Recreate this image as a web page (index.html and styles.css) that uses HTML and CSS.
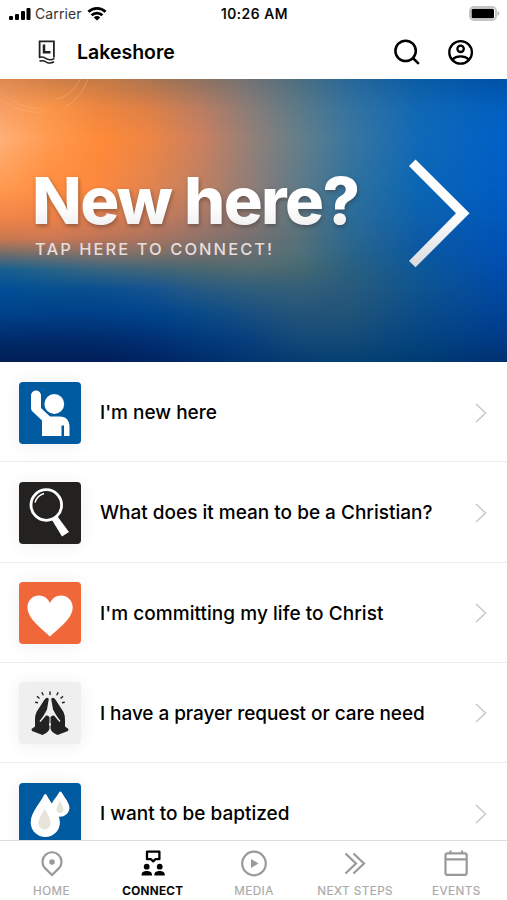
FILE: index.html
```html
<!DOCTYPE html>
<html lang="en">
<head>
<meta charset="utf-8">
<title>Lakeshore</title>
<link rel="stylesheet" href="styles.css">
</head>
<body>
<div class="app">
  <div class="status">
    <div class="carrier">
      <svg width="23" height="14" viewBox="0 0 23 14"><rect x="0" y="9" width="4" height="4" rx="1"/><rect x="6" y="7" width="4" height="6" rx="1"/><rect x="12" y="4" width="4" height="9" rx="1"/><rect x="17.500" y="1" width="4" height="12" rx="1"/></svg>
      <span class="carrier-name">Carrier</span>
      <svg width="20" height="14" viewBox="0 0 20 14" fill="none" stroke="#000" stroke-width="2.700"><path d="M1.400 4.800a12.500 12.500 0 0 1 17.200 0M4.600 8.300a7.800 7.800 0 0 1 10.800 0"/><path d="M10 13.500 6.800 10.400a4.500 4.500 0 0 1 6.400 0z" fill="#000" stroke="none"/></svg>
    </div>
    <span class="time">10:26 AM</span>
    <svg class="battery" width="31" height="15" viewBox="0 0 31 15"><rect x="1" y="1" width="26" height="13" rx="4" fill="#fff" stroke="#c4c4c4" stroke-width="2"/><rect x="2.600" y="2.700" width="22.400" height="9.500" rx="1.500"/><path d="M28.500 5v4.800q2-.8 2-2.400t-2-2.400z" fill="#bbb"/></svg>
  </div>
  <header class="header">
    <svg class="logo" width="18" height="26" viewBox="0 0 18 26" fill="none" stroke="#222"><path d="M1.600 18.300V2.300H15.900V18.600" stroke-width="1.800"/><path d="M6 5.500v7.700h6.500" stroke-width="2.500"/><path d="M1 18.700c3.200-2 5.500 0 8 1.300 2.600 1.200 5 .9 7.500-.7M1.500 22.300c3-1.500 5-.2 7.500 1.100 2.300 1 4.600.8 7-.6" stroke-width="1.600"/></svg>
    <h1 class="title">Lakeshore</h1>
    <svg class="search" width="26" height="26" viewBox="0 0 26 26" fill="none" stroke="#000" stroke-width="2.500"><circle cx="11.600" cy="11.900" r="10.200"/><path d="m18.800 19 6 5.800"/></svg>
    <svg width="26" height="26" viewBox="0 0 26 26" fill="none" stroke="#000" stroke-width="2.300"><circle cx="12.600" cy="13.400" r="11.300"/><circle cx="12.600" cy="9.800" r="3.200"/><path d="M4.200 20.600c4.500-4.200 12.300-4.200 16.800 0"/></svg>
  </header>
  <a class="banner">
    <div class="glow g1"></div><div class="glow g2"></div><div class="glow g3"></div><div class="glow g4"></div><div class="glow g5"></div><div class="glow g6"></div><div class="glow g7"></div><div class="glow g8"></div><div class="glow g9"></div><div class="glow g10"></div><div class="glow g11"></div>
    <svg class="rings" width="100" height="40" viewBox="0 0 100 40" fill="none" stroke="#ffd2a8" stroke-opacity=".3"><path d="M88 0C80 20 70 25 66 27M80 0C74 13 66 18 56 20"/><path d="M0 19c12 10 29 16 46 14M0 12c12 12 26 17 43 18" stroke-opacity=".18"/></svg>
    <div class="banner-text">
      <div class="banner-title">New here?</div>
      <div class="banner-sub">TAP HERE TO CONNECT!</div>
    </div>
    <svg class="banner-arrow" width="62" height="109" viewBox="0 0 62 109"><defs><linearGradient id="ag" x1="0" y1="0" x2="0" y2="1"><stop offset=".5" stop-color="#fff"/><stop offset="1" stop-color="#d8dadd"/></linearGradient></defs><path d="M6.500 .5 60.500 54.300 6.500 108.300 0 102 47 54.300 0 7z" fill="url(#ag)"/></svg>
  </a>
  <main class="list">
    <a class="row">
      <svg class="tile blue" viewBox="0 0 62 62" fill="#fff"><circle cx="35.300" cy="22" r="9.900"/><path d="M12 13.500a5 5 0 0 1 10 0V26l9 8.500h10c6 0 9.500 4 9.500 10V54H45V43.500h-2.500V54H23V38.500l-9.500-9Q12 28 12 26z"/></svg>
      <span class="label">I'm new here</span>
      <svg class="chev" viewBox="0 0 12 20"><path d="m1 1 9.500 9L1 19"/></svg>
    </a>
    <a class="row">
      <svg class="tile black" viewBox="0 0 62 62" fill="none" stroke="#fff"><circle cx="27.300" cy="23" r="15.300" stroke-width="2.800"/><path d="M16 20.500q2-7 9-9" stroke-width="1.500"/><path d="m33 38 5.500-3.500 11.500 15.500-7 4.500z" fill="#fff" stroke="none"/></svg>
      <span class="label">What does it mean to be a Christian?</span>
      <svg class="chev" viewBox="0 0 12 20"><path d="m1 1 9.500 9L1 19"/></svg>
    </a>
    <a class="row">
      <svg class="tile orange" viewBox="0 0 62 62" fill="#fff"><path d="M31 54.500C24 47.500 8.500 37 8.500 25.500 8.500 18 14 13.500 20 13.500c5 0 9 3 11 7.500 2-4.500 6-7.500 11-7.500 6 0 11.700 4.500 11.700 12C53.700 37 38 47.500 31 54.500z"/></svg>
      <span class="label wide">I'm committing my life to Christ</span>
      <svg class="chev" viewBox="0 0 12 20"><path d="m1 1 9.500 9L1 19"/></svg>
    </a>
    <a class="row">
      <svg class="tile grey" viewBox="0 0 62 62"><g id="hand"><path d="M29.800 17q-1.800-2.600-4.200.5L17.500 30q-1.500 3-1.500 8v6.500L12.500 47l.5 2 10.500 4q6.500-3 7-6.500V44q-1.200-1.500 0-3.500v-5.500q-3-2.500-4.700-.5l-5.300 6 5-8.500 2.500-4.500z" fill="#222"/><path d="m21 39.500 5-6" stroke="#eee" stroke-width="1.300" fill="none"/><path d="m24.300 13.300-1.500-3M20.500 16.500 18 14.300M19 20.800l-2.800-.6" stroke="#222" stroke-width="1.400"/></g><use href="#hand" transform="matrix(-1 0 0 1 62 0)"/><path d="M31 9.500v3.500" stroke="#222" stroke-width="1.400"/></svg>
      <span class="label tight">I have a prayer request or care need</span>
      <svg class="chev" viewBox="0 0 12 20"><path d="m1 1 9.500 9L1 19"/></svg>
    </a>
    <a class="row">
      <svg class="tile blue" viewBox="0 0 62 62" fill="#fff"><path d="M41.300 8.500q1.300 0 2 2c3 5 7.200 9.500 7.200 15a9.600 9.600 0 0 1-19 0c0-5.500 5-10 8-15q.7-2 1.800-2z"/><path d="M26.300 11q1.400 0 2.400 3c4 7.500 12.200 16 12.200 25.500a14.600 14.600 0 0 1-29.200 0C11.700 30 20 21.500 24 14q1-3 2.300-3z"/><path d="M25.800 26q5.700 9 5.700 14.500a6 6 0 0 1-12 0Q19.500 35 25.800 26zM41 18q3.500 5.500 3.500 8.500a3.500 3.500 0 0 1-7 0Q37.500 23.500 41 18z" fill="#e7e4dc"/></svg>
      <span class="label">I want to be baptized</span>
      <svg class="chev" viewBox="0 0 12 20"><path d="m1 1 9.500 9L1 19"/></svg>
    </a>
  </main>
  <nav class="tabs">
    <a class="tab"><svg viewBox="0 0 28 28"><path d="M14 25 7.200 18.400a9.500 9.500 0 1 1 13.600 0z"/><circle cx="14" cy="12" r="2.800" fill="currentColor" stroke="none"/></svg><span>HOME</span></a>
    <a class="tab active"><svg viewBox="0 0 28 28"><path d="M8 1.700h12.400v7.500h-4L14.200 11.400 12 9.200H8z" stroke-width="2.300" stroke-linejoin="round"/><g fill="currentColor" stroke="none"><circle cx="7.700" cy="16.700" r="2.900"/><circle cx="20.700" cy="16.700" r="2.900"/><path d="M2.600 25.500V24.500c0-4.600 10.400-4.600 10.400 0v1zM15.400 25.500V24.500c0-4.600 10.400-4.600 10.400 0v1z"/></g></svg><span>CONNECT</span></a>
    <a class="tab"><svg viewBox="0 0 28 28"><circle cx="14" cy="13.500" r="11.800"/><path d="m11 9 7.500 4.500L11 18z" fill="currentColor" stroke="none"/></svg><span>MEDIA</span></a>
    <a class="tab"><svg viewBox="0 0 28 28"><path d="m4.500 3.500 10.500 10-10.500 10M12.500 3.500 23 13.500l-10.500 10"/></svg><span>NEXT STEPS</span></a>
    <a class="tab"><svg viewBox="0 0 28 28"><rect x="3.500" y="3.300" width="21.200" height="21.500" rx="1.800"/><path d="M3.500 9.300h21.200M8.500 .6v3M20 .6v3"/></svg><span>EVENTS</span></a>
  </nav>
</div>
</body>
</html>
```

FILE: styles.css
```css
* { box-sizing: border-box; }
body { margin: 0; background: #fff; color: #000; font-family: Inter, "Liberation Sans", sans-serif; }
svg { display: block; flex: none; }
.app { width: 507px; height: 900px; display: flex; flex-direction: column; overflow: hidden; }
.status { height: 27px; flex: none; display: grid; grid-template-columns: 1fr auto 1fr; align-items: center; padding: 0 7px 0 9px; }
.carrier { display: flex; align-items: center; gap: 3px; }
.carrier-name { font-size: 14px; letter-spacing: 0.1px; color: #333; width: 49px; }
.time { font-size: 14px; font-weight: 500; letter-spacing: .5px; -webkit-text-stroke: .2px #000; }
.battery { justify-self: end; }
.header { height: 52px; flex: none; display: flex; align-items: center; padding: 0 33px 2px 38px; }
.title { margin: 0 auto 0 21px; font-size: 19.500px; font-weight: 600; }
.search { margin-right: 28px; }

/* The banner colour field: horizontal gradients, each fading in over the one above it. */
.banner {
  height: 283px; flex: none; display: flex; position: relative; overflow: hidden; padding: 82px 36px 0 32px;
  background: linear-gradient(90deg, #e08a50 0, #d08048 50px, #c57a45 100px, #ad7550 150px, #8f7260 200px, #707275 250px, #4d6e80 300px, #28689a 350px, #0a5ca5 420px, #0050a8 507px);
}
.glow { position: absolute; inset: 0; -webkit-mask: linear-gradient(180deg, transparent var(--a), #000 var(--b)); mask: linear-gradient(180deg, transparent var(--a), #000 var(--b)); }
.g1 { --a: 0px; --b: 30px; background: linear-gradient(90deg, #f9a066 0, #fb9648 50px, #ef8640 100px, #dd8048 150px, #bb7d62 200px, #8a7c78 250px, #5a7a88 300px, #3573a0 350px, #1068b4 420px, #005fc0 507px); }
.g2 { --a: 30px; --b: 60px; background: linear-gradient(90deg, #ffb078 0, #ff9a50 50px, #ff8a38 100px, #ee8644 150px, #cc8060 200px, #948078 250px, #647f8a 300px, #3a76a0 350px, #1069b8 420px, #0060c8 507px); }
.g3 { --a: 60px; --b: 110px; background: linear-gradient(90deg, #ff9a50 0, #ff8c3c 50px, #fb8840 100px, #e08450 150px, #c08060 200px, #907c78 250px, #5d7a88 300px, #30719c 350px, #0a66b4 420px, #005cc4 507px); }
.g4 { --a: 110px; --b: 140px; background: linear-gradient(90deg, #f08448 0, #ec8048 50px, #dc7c50 100px, #c87a58 150px, #a87868 200px, #887670 250px, #5a7480 300px, #2c6c98 350px, #0c60ac 420px, #0058bc 507px); }
.g5 { --a: 140px; --b: 160px; background: linear-gradient(90deg, #c87850 0, #cc7855 50px, #bc7458 100px, #a87460 150px, #8e7268 200px, #767070 250px, #557078 300px, #2c6890 350px, #0c5aa5 420px, #0052b8 507px); }
.g6 { --a: 160px; --b: 175px; background: linear-gradient(90deg, #706c6a 0, #78706a 50px, #80706a 100px, #7a7068 150px, #706c6c 200px, #686e70 250px, #50707a 300px, #2a6488 350px, #0a58a0 420px, #0050b4 507px); }
.g7 { --a: 175px; --b: 190px; background: linear-gradient(90deg, #186090 0, #286488 50px, #3a6680 100px, #426678 150px, #4a6870 200px, #506a70 250px, #466870 300px, #2a6080 350px, #0c5898 420px, #004cb0 507px); }
.g8 { --a: 190px; --b: 210px; background: linear-gradient(90deg, #004f98 0, #065090 50px, #0a5090 100px, #145490 150px, #285a84 200px, #305e7c 250px, #345e78 300px, #285a7c 350px, #0e5490 420px, #0048a4 507px); }
.g9 { --a: 210px; --b: 235px; background: linear-gradient(90deg, #00428a 0, #004088 50px, #004088 100px, #00448c 150px, #084a88 200px, #185080 250px, #245478 300px, #205478 350px, #0a4c88 420px, #004298 507px); }
.g10 { --a: 235px; --b: 260px; background: linear-gradient(90deg, #002c6c 0, #002a6a 50px, #002c6c 100px, #003074 150px, #003a7c 200px, #083f7c 250px, #144a78 300px, #144a78 350px, #044480 420px, #003a88 507px); }
.g11 { --a: 260px; --b: 283px; background: linear-gradient(90deg, #001f54 0, #001e55 50px, #001e58 100px, #002460 150px, #002c6a 200px, #02356f 250px, #043c70 300px, #044070 350px, #003c72 420px, #003070 507px); }
.rings { position: absolute; left: 0; top: 0; }
.banner-text { position: relative; flex: 1; }
.banner-title {
  font-size: 65px; line-height: 80px; font-weight: 800; letter-spacing: -1.600px; white-space: nowrap;
  background: linear-gradient(#fff 55%, #eee 85%); -webkit-background-clip: text; background-clip: text; color: transparent;
  filter: drop-shadow(1px 2px 2px rgba(50,45,45,.45));
}
.banner-sub { margin: -1px 0 0 3px; font-size: 16.500px; line-height: 18px; font-weight: 500; letter-spacing: 2.050px; color: #e6dddc; white-space: nowrap; }
.banner-arrow { position: relative; margin-top: -2px; }

.list { flex: 1; min-height: 0; overflow: hidden; }
.row { height: 100.250px; display: flex; align-items: center; padding: 2px 20px 0 19px; border-bottom: 1px solid #ececec; }
.tile { width: 62px; height: 62px; border-radius: 4px; box-shadow: 0 1px 18px rgba(0,0,0,.07); }
.blue { background: #005a9f; }
.black { background: #242221; }
.orange { background: #f0673a; }
.grey { background: #efefef; }
.label { flex: 1; margin-left: 19px; font-size: 19px; font-weight: 500; white-space: nowrap; }
.tight { letter-spacing: -.07px; }
.wide { letter-spacing: .05px; }
.chev { width: 12px; height: 20px; fill: none; stroke: #c8c8c8; stroke-width: 1.500; }
.tabs { height: 60px; flex: none; display: grid; grid-template-columns: repeat(5, 1fr); border-top: 1px solid #ddd; background: #fff; padding-left: 1px; }
.tab { display: flex; flex-direction: column; align-items: center; padding-top: 9px; gap: 5px; color: #999; font-size: 11.700px; line-height: 16px; }
.tab span { color: #aaa; white-space: nowrap; letter-spacing: .45px; -webkit-text-stroke: .2px currentColor; }
.tab svg { width: 28px; height: 28px; fill: none; stroke: currentColor; stroke-width: 2.200; }
.tab.active, .tab.active span { color: #000; font-weight: 600; }
.tab.active span { letter-spacing: .35px; }
```
